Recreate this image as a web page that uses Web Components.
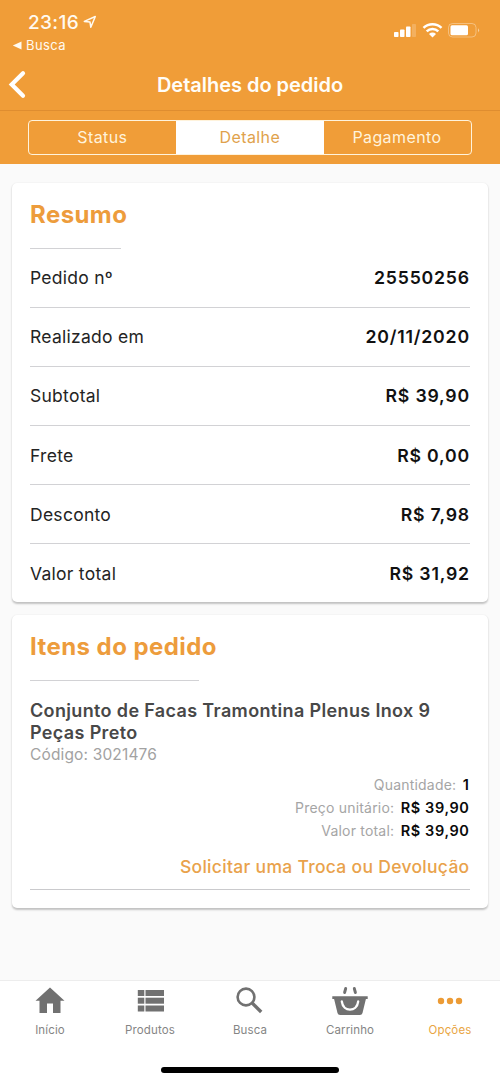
<!DOCTYPE html>
<html lang="pt-BR">
<head>
<meta charset="utf-8">
<title>Detalhes do pedido</title>
<style>
html,body{margin:0;padding:0}
body{font-family:Inter,"Liberation Sans",sans-serif;background:#fafafa;width:500px;height:1082px;overflow:hidden}
</style>
</head>
<body>
<order-screen></order-screen>
<script>
const define=(name,html,setup)=>customElements.define(name,class extends HTMLElement{
  constructor(){
    super();
    const t=document.createElement('template');
    t.innerHTML=html;
    this.attachShadow({mode:'open'}).append(t.content.cloneNode(true));
  }
  connectedCallback(){ if(setup) setup(this,this.shadowRoot); }
});

define('status-bar',`<style>
:host{display:flex;justify-content:space-between;height:57px;box-sizing:border-box;padding:10px 20px 0 12px;color:#fffaf0}
.time{display:flex;align-items:center;height:24px;padding-left:16px;font-size:19px;font-weight:500;letter-spacing:.35px}
.time svg{margin-left:4px}
.back{display:flex;align-items:center;height:20px;font-size:13px;letter-spacing:.4px;margin-top:1px}
.back svg{margin-right:4px}
.icons{display:flex;align-items:flex-start;padding-top:11px}
svg{display:block}
</style>
<div><div class="time"><span>23:16</span><svg width="14" height="14" viewBox="0 0 14 14"><path d="M1.3 6.4 12.3 1.5 7.8 12.3 7 7.1Z" fill="none" stroke="#fffaf0" stroke-width="1.5" stroke-linejoin="round"/></svg></div>
<div class="back"><svg width="10" height="9" viewBox="0 0 10 9"><path d="M.8 4.5 9.5.5v8Z" fill="#fffaf0"/></svg><span>Busca</span></div></div>
<div class="icons"><svg width="87" height="18" viewBox="0 0 87 18">
<g fill="#fff"><rect x="1" y="11" width="4.500" height="5" rx=".8"/><rect x="7" y="8.500" width="4.500" height="7.500" rx=".8"/><rect x="13" y="5.500" width="4.500" height="10.500" rx=".8"/><rect x="19" y="3" width="4" height="13" rx=".8" opacity=".2"/></g>
<g fill="none" stroke="#fff" stroke-width="2.500"><path d="M30.500 6.800a13 13 0 0 1 18 0"/><path d="M33.700 10.300a8.200 8.200 0 0 1 11.600 0"/></g><path d="M36 13a5 5 0 0 1 7 0l-3.500 3.400Z" fill="#fff"/>
<rect x="55.500" y="2.500" width="27.500" height="13.500" rx="4" fill="none" stroke="#fff" stroke-opacity=".35"/><rect x="57.500" y="4.300" width="17.500" height="10" rx="1.500" fill="#fff"/><path d="M85 7.200q2.200 2 0 4.200Z" fill="#fff" opacity=".5"/>
</svg></div>`);

define('nav-header',`<style>
:host{display:grid;grid-template-columns:60px 1fr 60px;align-items:center;height:54px;box-sizing:border-box;border-bottom:1px solid #df8d30;color:#fffdf8}
h1{margin:0;text-align:center;font-size:20px;font-weight:600;letter-spacing:-.03px;line-height:26px;padding-top:2px;white-space:nowrap}
svg{display:block;margin:1px 0 0 7px}
</style><svg width="21" height="30" viewBox="0 0 21 30"><path d="M16 4.300 4.700 15.500 16 26.700" fill="none" stroke="#fff" stroke-width="4.200" stroke-linecap="round" stroke-linejoin="miter"/></svg><h1><slot></slot></h1>`);

define('segment-control',`<style>
:host{display:grid;grid-template-columns:147px 148px 1fr;height:35px;margin:9px 28.500px 0 28.400px;box-sizing:border-box;border:1.500px solid #fff3dc;border-radius:4px;overflow:hidden}
</style><slot></slot>`);
define('segment-item',`<style>
:host{display:flex;align-items:center;justify-content:center;font-size:16px;letter-spacing:.4px;padding:0 1px 2px 0;color:#fff3dc}
:host([active]){background:#fff;color:#dfa24c}
</style><slot></slot>`);

define('info-card',`<style>
:host{display:block;box-sizing:border-box;background:#fff;border-radius:5px;padding:0 18.500px 0 18px;box-shadow:0 1.500px 2px rgba(0,0,0,.22),0 0 2px rgba(0,0,0,.04)}
h2{margin:0;padding-top:18px;height:46.500px;line-height:28px;font-size:24px;font-weight:700;letter-spacing:.43px;color:#ed9c3c;white-space:nowrap}
.rule{height:1px;width:var(--rule,90.500px);background:#d2d2d5}
</style><h2></h2><div class="rule"></div><slot></slot>`,(el,r)=>{r.querySelector('h2').textContent=el.getAttribute('heading')});

define('summary-row',`<style>
:host{display:flex;justify-content:space-between;align-items:center;height:59.200px;box-sizing:border-box;border-bottom:1.500px solid #d2d2d5;font-size:17.500px;color:#242424;white-space:nowrap}
:host(:last-of-type){border-bottom-color:transparent}
.l{letter-spacing:.27px}
b{font-weight:600;font-size:17.700px;color:#111;letter-spacing:.8px;margin-right:-.4px}
</style><span class="l"></span><b><slot></slot></b>`,(el,r)=>{r.querySelector('.l').textContent=el.getAttribute('label')});

define('order-item',`<style>
:host{display:block;border-bottom:1.500px solid #cacacd;height:209.500px;box-sizing:border-box}
h3{margin:0;padding-top:19px;font-size:18px;line-height:22px;font-weight:600;letter-spacing:.35px;color:#484848;white-space:nowrap}
.code{font-size:15.500px;line-height:22px;letter-spacing:.15px;color:#a2a2a2}
.lines{padding-top:7px}
</style><h3><slot name="name"></slot></h3><div class="code"><slot name="code"></slot></div><div class="lines"><slot></slot></div>`);
define('item-line',`<style>
:host{display:flex;justify-content:flex-end;align-items:center;gap:6.500px;height:23px;font-size:14.500px;color:#a5a5a5;white-space:nowrap}
span{font-size:14px;letter-spacing:.2px}
b{font-weight:600;color:#0a0a0a;letter-spacing:.6px}
</style><span></span><b><slot></slot></b>`,(el,r)=>{r.querySelector('span').textContent=el.getAttribute('label')});
define('action-link',`<style>
:host{display:block;text-align:right;font-size:17.500px;line-height:24px;font-weight:500;letter-spacing:.3px;color:#e9a24b;white-space:nowrap;margin-top:13px}
</style><slot></slot>`);

define('tab-bar',`<style>
:host{display:grid;grid-template-columns:repeat(5,1fr);height:102px;box-sizing:border-box;border-top:1.500px solid #ededed;background:#fff;position:relative}
.home{position:absolute;left:161px;top:85.500px;width:178px;height:6px;border-radius:3px;background:#000}
</style><slot></slot><div class="home"></div>`);
const icons={
home:'<path d="M20 5.500 5.500 18.800H9.500V31h7.500V21.500h6V31h7.500V18.800h4Z" fill="#717171"/>',
list:'<g fill="#717171"><rect x="7.800" y="8" width="6.500" height="6"/><rect x="15.500" y="8" width="18.500" height="6"/><rect x="7.800" y="15.700" width="6.500" height="6"/><rect x="15.500" y="15.700" width="18.500" height="6"/><rect x="7.800" y="23.500" width="6.500" height="6"/><rect x="15.500" y="23.500" width="18.500" height="6"/></g>',
search:'<g fill="none" stroke="#717171"><circle cx="16" cy="15" r="8.400" stroke-width="2.600"/><path d="m22.200 21 9 9" stroke-width="3.400"/></g>',
cart:'<path d="M2.300 14.300h35.400v2.800h-1.800L32.500 31q-.5 2-2.600 2H10.100q-2.100 0-2.600-2L4.100 17.100H2.300Z" fill="#717171"/><g fill="none" stroke-linecap="round"><path d="m14.600 10.500 1.100-4M25.400 10.500l-1.100-4" stroke="#717171" stroke-width="2.900"/><path d="M11.800 19.500c1.400 10.800 15 10.800 16.400 0" stroke="#fff" stroke-width="2.300"/></g>',
more:'<g fill="#ec9b35"><circle cx="11" cy="19" r="3.200"/><circle cx="20" cy="19" r="3.200"/><circle cx="29" cy="19" r="3.200"/></g>'};
define('tab-item',`<style>
:host{display:flex;flex-direction:column;align-items:center;padding-top:1px;font-size:11.500px;letter-spacing:.13px;color:#858585}
:host([active]){color:#e9a543}
svg{display:block}
span{line-height:16px;margin-top:4px}
</style><svg width="40" height="36" viewBox="0 0 40 36"></svg><span><slot></slot></span>`,(el,r)=>{r.querySelector('svg').innerHTML=icons[el.getAttribute('icon')]});

define('order-screen',`<style>
:host{display:flex;flex-direction:column;height:1082px;background:#fafafa}
header{height:164px;background:#f09d38;flex:none}
main{flex:1;display:flex;flex-direction:column;padding:19px 12px 0;gap:13px}
.a{height:419px}.b{height:293px;--rule:169px}
</style>
<header><status-bar></status-bar><nav-header>Detalhes do pedido</nav-header>
<segment-control><segment-item>Status</segment-item><segment-item active>Detalhe</segment-item><segment-item>Pagamento</segment-item></segment-control></header>
<main>
<info-card class="a" heading="Resumo">
<summary-row label="Pedido nº">25550256</summary-row>
<summary-row label="Realizado em">20/11/2020</summary-row>
<summary-row label="Subtotal">R$ 39,90</summary-row>
<summary-row label="Frete">R$ 0,00</summary-row>
<summary-row label="Desconto">R$ 7,98</summary-row>
<summary-row label="Valor total">R$ 31,92</summary-row>
</info-card>
<info-card class="b" heading="Itens do pedido">
<order-item><span slot="name">Conjunto de Facas Tramontina Plenus Inox 9<br>Peças Preto</span><span slot="code">Código: 3021476</span>
<item-line label="Quantidade:">1</item-line><item-line label="Preço unitário:">R$ 39,90</item-line><item-line label="Valor total:">R$ 39,90</item-line>
<action-link>Solicitar uma Troca ou Devolução</action-link></order-item>
</info-card>
</main>
<tab-bar><tab-item icon="home">Início</tab-item><tab-item icon="list">Produtos</tab-item><tab-item icon="search">Busca</tab-item><tab-item icon="cart">Carrinho</tab-item><tab-item icon="more" active>Opções</tab-item></tab-bar>`);
</script>
</body>
</html>
